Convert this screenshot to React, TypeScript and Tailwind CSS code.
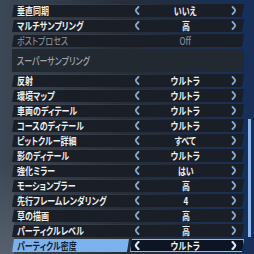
const rows = [
  { label: "反射", value: "ウルトラ" },
  { label: "環境マップ", value: "ウルトラ" },
  { label: "車両のディテール", value: "ウルトラ" },
  { label: "コースのディテール", value: "ウルトラ" },
  { label: "ピットクルー詳細", value: "すべて" },
  { label: "影のディテール", value: "ウルトラ" },
  { label: "強化ミラー", value: "はい" },
  { label: "モーションブラー", value: "高" },
  { label: "先行フレームレンダリング", value: "4" },
  { label: "草の描画", value: "高" },
  { label: "パーティクルレベル", value: "高" },
]

function Chevron({ dir, bright }: { dir: "l" | "r"; bright?: boolean }) {
  return (
    <svg width="6" height="9" viewBox="0 0 6 9" className="shrink-0">
      <path
        d={dir === "l" ? "M4.4 1 Q1.8 3.6 1.8 4.5 Q1.8 5.4 4.4 8" : "M1.6 1 Q4.2 3.6 4.2 4.5 Q4.2 5.4 1.6 8"}
        fill="none"
        stroke={bright ? "#d6e8ff" : "#86a6cb"}
        strokeWidth={bright ? 2.3 : 1.9}
        strokeLinecap="round"
      />
    </svg>
  )
}

function Txt({ children, className = "" }: { children: React.ReactNode; className?: string }) {
  return (
    <span
      className={`block scale-x-[0.8] whitespace-nowrap text-[10px] leading-[11px] [font-feature-settings:'palt'] ${className}`}
    >
      {children}
    </span>
  )
}

function Row({ label, value, dim }: { label: string; value: string; dim?: boolean }) {
  const color = dim ? "text-[#80868e] font-medium" : "text-[#eceef0] font-bold"
  return (
    <div className="relative flex h-[13px] w-[232px] items-center bg-[#1a1e27] [clip-path:polygon(2px_0,100%_0,calc(100%-2px)_100%,0_100%)]">
      <div className="absolute left-0 top-0 h-px w-[200px] bg-gradient-to-r from-[#3e4550] via-[#333a44] to-transparent" />
      <div className="flex w-[118px] items-center pl-[5px]">
        <Txt className={`origin-left ${color}`}>{label}</Txt>
      </div>
      <div className="flex flex-1 items-center justify-between pl-[4px] pr-[7px]">
        {dim ? <span className="w-[6px]" /> : <Chevron dir="l" />}
        <Txt className={`origin-center ${color}`}>{value}</Txt>
        {dim ? <span className="w-[6px]" /> : <Chevron dir="r" />}
      </div>
    </div>
  )
}

export default function App() {
  return (
    <div className="relative h-[254px] w-[254px] overflow-hidden bg-gradient-to-r from-[#3c4856] via-[#262d38] to-[#14305e] font-['Noto_Sans_CJK_JP',sans-serif]">
      <div className="absolute bottom-0 left-0 h-[90px] w-[14px] bg-gradient-to-t from-[#56616d] to-transparent" />
      <div className="flex flex-col gap-[2px] pl-[12px] pt-[4px]">
        <Row label="垂直同期" value="いいえ" />
        <Row label="マルチサンプリング" value="高" />
        <Row label="ポストプロセス" value="Off" dim />
        <div className="flex h-[23px] w-[232px] items-center bg-[#232931] pl-[5px]">
          <Txt className="origin-left font-medium text-[#9ea4ab]">スーパーサンプリング</Txt>
        </div>
        {rows.map((r) => (
          <Row key={r.label} label={r.label} value={r.value} />
        ))}
        <div className="flex h-[13px] w-[232px] items-center">
          <div className="flex h-full w-[117px] items-center bg-[#7cb2ee] pl-[5px] [clip-path:polygon(2px_0,100%_0,calc(100%-2px)_100%,0_100%)]">
            <Txt className="origin-left font-bold text-[#15202e]">パーティクル密度</Txt>
          </div>
          <div className="ml-[1px] flex h-full flex-1 items-center justify-between border border-[#8fc0f4] bg-[#0d1524] pl-[3px] pr-[6px] [clip-path:polygon(2px_0,100%_0,calc(100%-2px)_100%,0_100%)]">
            <Chevron dir="l" bright />
            <Txt className="origin-center font-bold text-[#f2f4f6]">ウルトラ</Txt>
            <Chevron dir="r" bright />
          </div>
        </div>
      </div>
      <div className="absolute right-[3px] top-0 h-full w-px bg-[#1d2f4c]" />
      <div className="absolute right-[3px] top-[119px] h-[118px] w-[3px] bg-[#8cb8ea]" />
    </div>
  )
}
